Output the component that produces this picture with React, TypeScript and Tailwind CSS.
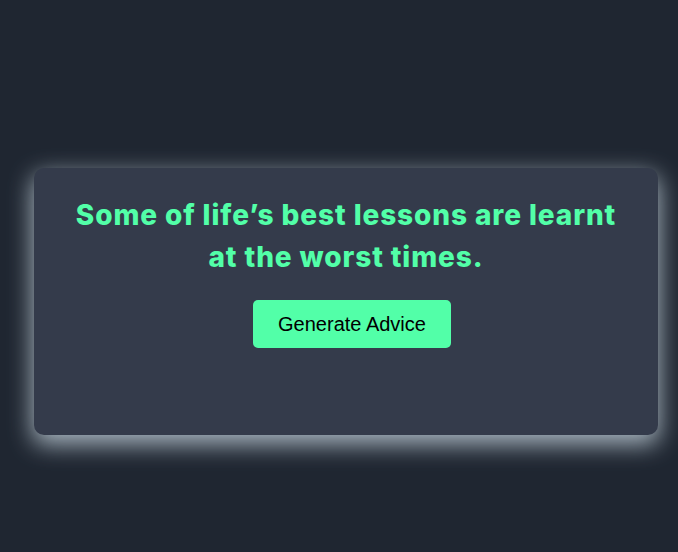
export default function App() {
  return (
    <div className="min-h-[552px] w-full bg-[#1f2631] pt-[168px] pl-[34px]">
      <div className="flex h-[267px] w-[624px] flex-col items-center rounded-[10px] bg-[#343b4b] pt-[26px] shadow-[0_8px_24px_1px_rgba(205,220,230,0.8)]">
        <h1 className="w-[560px] text-center font-['Inter',sans-serif] text-[28px] font-extrabold leading-[42px] tracking-[0.9px] text-[#52ffa8]">
          Some of life’s best lessons are learnt at the worst times.
        </h1>
        <button className="ml-[12px] mt-[22px] h-[48px] w-[198px] rounded-[5px] bg-[#52ffa8] font-['Liberation_Sans',Arial,sans-serif] text-[20px] text-black">
          Generate Advice
        </button>
      </div>
    </div>
  );
}
